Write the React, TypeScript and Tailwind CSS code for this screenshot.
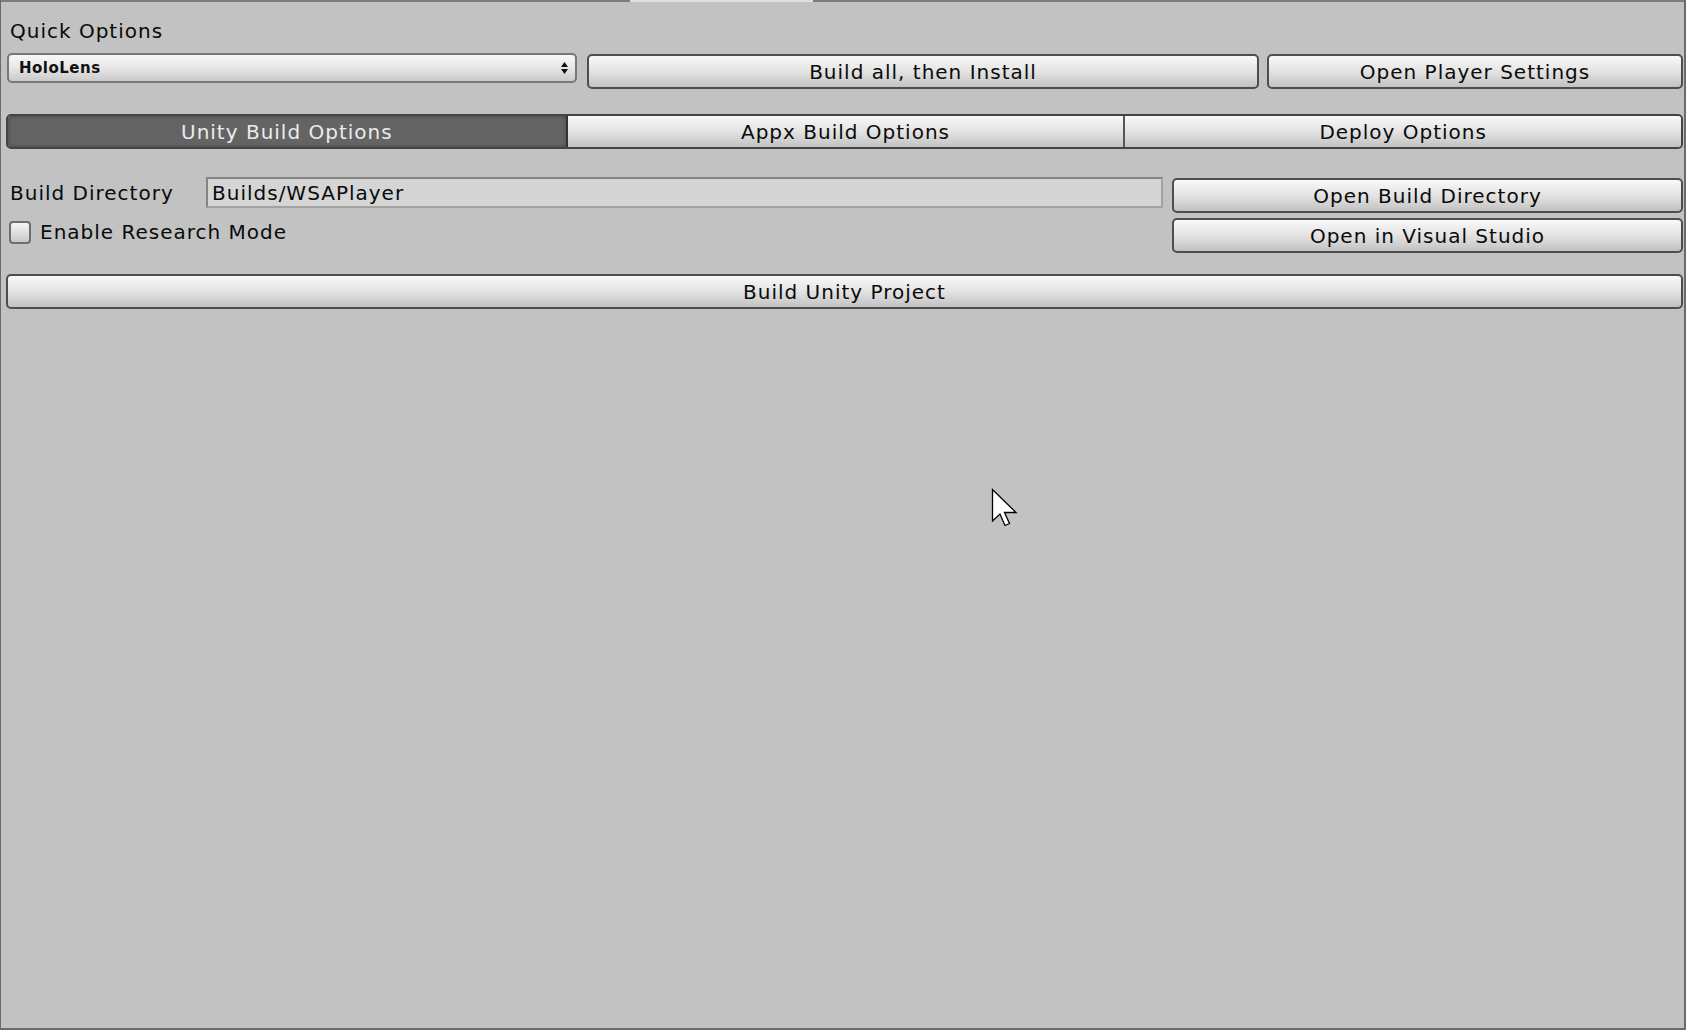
import React from "react";

const btn =
  "flex items-center justify-center h-[35px] rounded-[5px] border-2 border-[#4e4e4e] bg-linear-to-b from-[#f9f9f9] via-[#e3e3e3] to-[#c2c2c2] text-[20px] tracking-[1px] text-[#0a0a0a]";

const Cursor: React.FC = () => (
  <svg className="absolute left-[990px] top-[488px]" width="28" height="40" viewBox="0 0 28 40">
    <path d="M1.5 1.5 L1.5 33 L9 26 L14 37.5 L18.5 35.5 L13.5 24.5 L25 24.5 Z" fill="#fff" stroke="#000" strokeWidth="1.3" strokeLinejoin="miter" />
  </svg>
);

const App: React.FC = () => {
  return (
    <div className="relative w-[1686px] h-[1030px] overflow-hidden bg-[#c2c2c2] border-l border-r-2 border-b-2 border-[#6a6a6a] font-['DejaVu_Sans',sans-serif] text-[#0a0a0a]">
      <div className="flex h-[2px]">
        <div className="w-[629px] bg-[#7c7c7c]" />
        <div className="w-[183px] bg-[#dedede]" />
        <div className="flex-1 bg-[#7c7c7c]" />
      </div>

      <div className="flex flex-col pl-[5px] pr-[1px]">
        <div className="mt-[18px] h-[22px] leading-[22px] pl-[4px] text-[20px] tracking-[1px]">Quick Options</div>

        <div className="mt-[11px] flex items-start">
          <div className="ml-[1px] w-[570px] h-[30px] flex items-center justify-between rounded-[5px] border-2 border-[#777] bg-linear-to-b from-[#f8f8f8] via-[#e6e6e6] to-[#cacaca] pl-[10px] pr-[7px]">
            <span className="text-[15px] font-bold tracking-[0.5px] text-[#111]">HoloLens</span>
            <svg width="7" height="12" viewBox="0 0 7 12">
              <path d="M3.5 0 L7 5 L0 5 Z M0 7 L7 7 L3.5 12 Z" fill="#111" />
            </svg>
          </div>
          <div className={`${btn} mt-[1px] ml-[10px] w-[672px]`}>Build all, then Install</div>
          <div className={`${btn} mt-[1px] ml-[8px] w-[416px]`}>Open Player Settings</div>
        </div>

        <div className="mt-[25px] h-[35px] grid grid-cols-3 rounded-[5px] border-2 border-[#444] overflow-hidden">
          <div className="flex items-center justify-center bg-[#646464] shadow-[inset_0_0_4px_rgba(0,0,0,0.3)] text-[20px] tracking-[1px] text-[#ebebeb]">
            Unity Build Options
          </div>
          <div className="flex items-center justify-center border-l-2 border-[#333] bg-linear-to-b from-[#f9f9f9] via-[#e3e3e3] to-[#c2c2c2] text-[20px] tracking-[1px]">
            Appx Build Options
          </div>
          <div className="flex items-center justify-center border-l-2 border-[#555] bg-linear-to-b from-[#f9f9f9] via-[#e3e3e3] to-[#c2c2c2] text-[20px] tracking-[1px]">
            Deploy Options
          </div>
        </div>

        <div className="mt-[28px] flex items-start">
          <div className="flex-1 flex flex-col">
            <div className="h-[31px] flex items-center">
              <div className="w-[200px] pl-[4px] text-[20px] tracking-[1px]">Build Directory</div>
              <div className="w-[957px] h-[31px] flex items-center border-2 border-t-[#858585] border-l-[#858585] border-r-[#a2a2a2] border-b-[#a2a2a2] bg-[#d5d5d5] pl-[4px] text-[20px] tracking-[1px]">
                Builds/WSAPlayer
              </div>
            </div>
            <div className="mt-[9px] flex items-center">
              <div className="ml-[3px] w-[22px] h-[23px] rounded-[4px] border-2 border-[#6e6e6e] bg-linear-to-b from-[#f6f6f6] to-[#c8c8c8]" />
              <span className="ml-[9px] text-[20px] tracking-[1px]">Enable Research Mode</span>
            </div>
          </div>
          <div className="ml-[9px] mt-[1px] w-[511px] flex flex-col gap-[5px]">
            <div className={btn}>Open Build Directory</div>
            <div className={btn}>Open in Visual Studio</div>
          </div>
        </div>

        <div className={`${btn} mt-[21px]`}>Build Unity Project</div>
      </div>

      <Cursor />
    </div>
  );
};

export default App;
